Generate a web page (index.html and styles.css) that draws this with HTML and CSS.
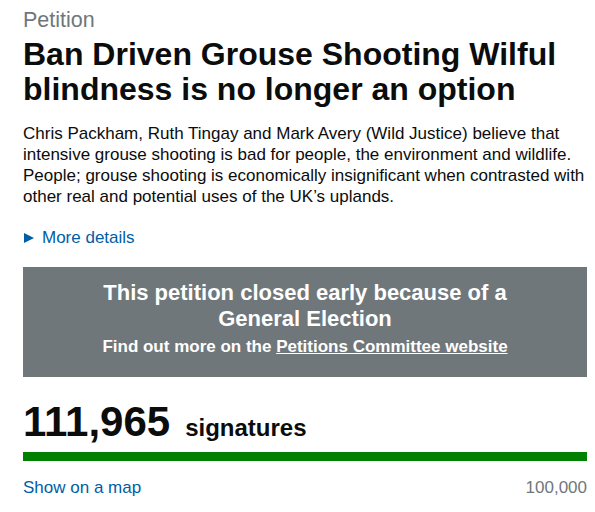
FILE: index.html
```html
<!DOCTYPE html>
<html lang="en">
<head>
<meta charset="utf-8">
<title>Petition</title>
<link rel="stylesheet" href="styles.css">
</head>
<body>
<main class="page">
  <span class="caption">Petition</span>
  <h1 class="title">Ban Driven Grouse Shooting Wilful blindness is no longer an option</h1>
  <p class="summary">Chris Packham, Ruth Tingay and Mark Avery (Wild Justice) believe that intensive grouse shooting is bad for people, the environment and wildlife. People; grouse shooting is economically insignificant when contrasted with other real and potential uses of the UK’s uplands.</p>
  <div class="details"><span class="arrow"></span><a class="link" href="#">More details</a></div>
  <section class="notice">
    <h2 class="notice-title">This petition closed early because of a General Election</h2>
    <p class="notice-text">Find out more on the <a href="#" class="notice-link">Petitions Committee website</a></p>
  </section>
  <div class="count"><span class="count-number">111,965</span><span class="count-label">signatures</span></div>
  <div class="bar"><div class="bar-fill" style="width:100%"></div></div>
  <div class="foot">
    <a class="link" href="#">Show on a map</a>
    <span class="target">100,000</span>
  </div>
</main>
</body>
</html>
```

FILE: styles.css
```css
* { box-sizing: border-box; }
html, body { margin: 0; padding: 0; background: #fff; }
body {
  font-family: "Liberation Sans", Arial, sans-serif;
  color: #0b0c0c;
}
.page {
  width: 595px;
  padding: 8px 8px 0 23px;
}
.caption {
  display: block;
  font-size: 21.5px;
  line-height: 25px;
  color: #6f777b;
}
.title {
  margin: 4px 0 0;
  font-size: 32px;
  line-height: 35px;
  font-weight: 700;
}
.summary {
  margin: 16px 0 0;
  font-size: 17px;
  line-height: 21px;
}
.details {
  margin-top: 20px;
  display: flex;
  align-items: center;
  font-size: 17px;
  line-height: 21px;
}
.arrow {
  width: 0;
  height: 0;
  border-left: 10px solid #005ea5;
  border-top: 5px solid transparent;
  border-bottom: 5px solid transparent;
  margin: 0 8px 0 1px;
}
.link {
  color: #005ea5;
  text-decoration: none;
  font-size: 17px;
}
.notice {
  margin-top: 19px;
  background: #6f777b;
  color: #fff;
  text-align: center;
  height: 110px;
  padding: 13px 20px 0;
}
.notice-title {
  margin: 0 auto;
  max-width: 420px;
  font-size: 22px;
  line-height: 26px;
  font-weight: 700;
}
.notice-text {
  margin: 5px 0 0;
  font-size: 17px;
  line-height: 20px;
  font-weight: 700;
}
.notice-link { color: #fff; text-decoration: underline; }
.count {
  margin-top: 25px;
  display: flex;
  align-items: baseline;
}
.count-number {
  font-size: 42px;
  line-height: 40px;
  font-weight: 700;
}
.count-label {
  font-size: 24px;
  font-weight: 700;
  margin-left: 15px;
}
.bar {
  margin-top: 10px;
  height: 9px;
  background: #dee0e2;
}
.bar-fill { height: 100%; background: #008000; }
.foot {
  margin-top: 16px;
  display: flex;
  justify-content: space-between;
  font-size: 17px;
  line-height: 21px;
}
.target { color: #6f777b; }
```
